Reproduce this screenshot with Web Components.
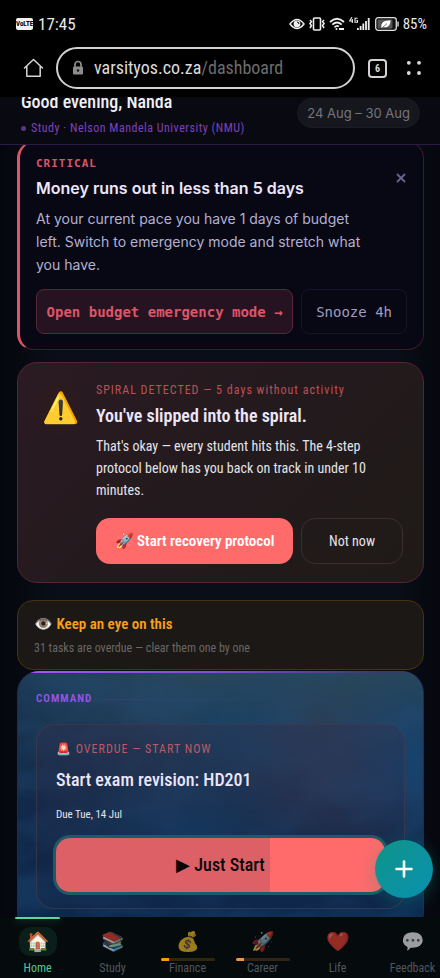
<!DOCTYPE html>
<html lang="en">
<head>
<meta charset="utf-8">
<meta name="viewport" content="width=device-width, initial-scale=1">
<title>VarsityOS</title>
<style>
  html, body {
    height: 100%;
  }

  body {
    --narrow: "Roboto Condensed", Roboto, "Liberation Sans", sans-serif;
    --round: Inter, Roboto, sans-serif;
    --mono: "DejaVu Sans Mono", "Liberation Mono", monospace;
    --coral: #ff6b6b;
    --red: #dd5566;
    --light: #ece6fa;
    margin: 0;
    display: flex;
    flex-direction: column;
    overflow: hidden;
    background: #080a13;
    color: #e4e4ea;
    font-family: var(--narrow);
    font-size: 14px;
    line-height: 22px;
  }

  main {
    flex: 1;
    min-height: 0;
    overflow: hidden auto;
    scrollbar-width: none;
    padding: 0 16px 0 17px;
    background: linear-gradient(90deg, #05060d, #0a0e18 12%, #0a0e18 90%, #06070f);
  }
</style>
</head>
<body>
  <phone-status time="17:45" battery="85%"></phone-status>
  <browser-bar host="varsityos.co.za" path="/dashboard" tabs="6"></browser-bar>
  <page-header>
    <span slot="greeting">Good evening, Nanda</span>
    <span slot="context">Study · Nelson Mandela University (NMU)</span>
    <span slot="week">24 Aug – 30 Aug</span>
  </page-header>

  <main>
    <critical-card>
      <span slot="level">CRITICAL</span>
      <span slot="title">Money runs out in less than 5 days</span>
      At your current pace you have 1 days of budget left. Switch to emergency mode and stretch what you have.
      <span slot="action">Open budget emergency mode →</span>
      <span slot="snooze">Snooze 4h</span>
    </critical-card>

    <spiral-card>
      <span slot="label">SPIRAL DETECTED — 5 days without activity</span>
      <span slot="title">You've slipped into the spiral.</span>
      That's okay — every student hits this. The 4-step protocol below has you back on track in under 10 minutes.
      <span slot="action">🚀 Start recovery protocol</span>
      <span slot="dismiss">Not now</span>
    </spiral-card>

    <notice-card>
      <span slot="title">👁️ Keep an eye on this</span>
      31 tasks are overdue — clear them one by one
    </notice-card>

    <command-card heading="COMMAND">
      <task-card>
        <span slot="label">🚨 OVERDUE — START NOW</span>
        <span slot="title">Start exam revision: HD201</span>
        <span slot="due">Due Tue, 14 Jul</span>
        <span slot="action">▶ Just Start</span>
      </task-card>
    </command-card>
  </main>

  <bottom-nav>
    <nav-item icon="🏠" href="#home" active>Home</nav-item>
    <nav-item icon="📚" href="#study">Study</nav-item>
    <nav-item icon="💰" href="#finance" bar="#f59e0b">Finance</nav-item>
    <nav-item icon="🚀" href="#career" bar="#fb923c">Career</nav-item>
    <nav-item icon="❤️" href="#life">Life</nav-item>
    <nav-item icon="💬" href="#feedback">Feedback</nav-item>
  </bottom-nav>
  <add-button></add-button>

<script>
const base = /*html*/ `
<style>
  * { box-sizing: border-box; }
  :host { display: block; }
  h1, h2, p { margin: 0; font-weight: inherit; }
  button {
    margin: 0;
    padding: 0;
    border: 0;
    background: none;
    color: inherit;
    font: inherit;
    cursor: pointer;
  }
  a { color: inherit; text-decoration: none; }
  svg { display: block; }
</style>
`;

// registers an element whose shadow root is cloned from the markup
function define(name, markup, setup) {
  const template = document.createElement("template");
  template.innerHTML = base + markup;

  class Element extends HTMLElement {
    constructor() {
      super();
      this.attachShadow({ mode: "open" });
      this.shadowRoot.appendChild(template.content.cloneNode(true));
    }

    connectedCallback() {
      if (setup) setup(this, (selector) => this.shadowRoot.querySelector(selector));
    }
  }

  window.customElements.define(name, Element);
}

define("phone-status", /*html*/ `
<style>
  :host {
    display: flex;
    align-items: center;
    height: 47px;
    flex: none;
    padding: 0 13px 0 16px;
    background: #000;
    color: #e8e8e8;
    font-size: 17px;
  }
  .volte {
    width: 17px;
    height: 12px;
    border-radius: 2px;
    background: #f2f2f2;
    color: #000;
    font-size: 7px;
    font-weight: 700;
    line-height: 12px;
    text-align: center;
  }
  #time { margin-left: 5px; }
  .icons {
    display: flex;
    align-items: center;
    gap: 4px;
    margin-left: auto;
  }
  #battery { font-size: 15px; }
</style>
<span class="volte">VoLTE</span>
<span id="time"></span>
<div class="icons">
  <svg width="16" height="12" viewBox="0 0 16 12"><path d="M1 6Q8-3 15 6Q8 15 1 6Z" fill="none" stroke="#eee" stroke-width="1.5"/><circle cx="8" cy="6" r="3.4" fill="#eee"/><path d="M8 4a2 2 0 0 1 2 2" fill="none" stroke="#000"/></svg>
  <svg width="16" height="14" viewBox="0 0 16 14" fill="none" stroke="#eee" stroke-width="1.6"><rect x="4.5" y="1" width="7" height="12" rx="1"/><path d="M1 3l1.4 1.5L1 6.5l1.4 2L1 11M15 3l-1.4 1.5L15 6.5l-1.4 2L15 11"/></svg>
  <svg width="16" height="14" viewBox="0 0 16 14" fill="none" stroke="#eee" stroke-width="1.8"><path d="M1 5Q8-1.5 15 5M3.3 7.6Q8 3.3 12.7 7.6M5.5 10.2Q8 8 9.8 9.6"/><circle cx="7.5" cy="12" r="1" fill="#eee" stroke="none"/><path d="M10 12h5" stroke-width="2"/></svg>
  <svg width="22" height="14" viewBox="0 0 22 14"><path d="M3 0L.7 4H4M3.3 2v4M8.5 1.3H6v4h2.5V3.5H7.4" fill="none" stroke="#eee" stroke-width="1.1"/><path d="M8 11h1.800v2H8zM10.700 9h1.800v4h-1.800zM13.400 6.500h1.800V13h-1.800zM16.100 4h1.800v9h-1.800zM18.800 1h1.800v12h-1.800z" fill="#eee"/></svg>
  <svg width="24" height="14" viewBox="0 0 24 14"><rect x=".7" y=".7" width="20.6" height="12.6" rx="2.5" fill="#111" stroke="#ddd" stroke-width="1.3"/><rect x="2.5" y="2.5" width="15" height="9" rx="1" fill="#555"/><path d="M6.5 11C5.5 5.5 9 3.5 15.5 3.3 15.5 8.5 13 11 8.5 10.2z" fill="#fff"/><path d="M7 11l5-4.500" stroke="#555" stroke-width=".8"/><path d="M23 4.500v5" stroke="#ddd" stroke-width="1.4"/></svg>
  <span id="battery"></span>
</div>
`, (host, $) => {
  $("#time").textContent = host.getAttribute("time");
  $("#battery").textContent = host.getAttribute("battery");
});

define("browser-bar", /*html*/ `
<style>
  :host {
    display: flex;
    align-items: center;
    flex: none;
    padding: 0 18px 8px 22px;
    background: #000;
    color: #dcdcdc;
  }
  .address {
    display: flex;
    align-items: center;
    gap: 10px;
    flex: 1;
    min-width: 0;
    height: 42px;
    margin: 0 13px 0 11px;
    padding: 0 14px;
    border: 2px solid #d2d2d2;
    border-radius: 21px;
    font-size: 18px;
    white-space: nowrap;
  }
  #path { color: #6c6c6c; }
  #tabs {
    width: 19px;
    height: 19px;
    border: 2px solid #d2d2d2;
    border-radius: 4px;
    font-size: 10px;
    font-weight: 700;
    line-height: 15px;
  }
  .menu { margin-left: 19px; }
</style>
<button aria-label="Home page">
  <svg width="23" height="22" viewBox="0 0 23 22" fill="none" stroke="#d6d6d6" stroke-width="1.5" stroke-linejoin="round" stroke-linecap="round"><path d="M2.5 11L11.5 2.5 20.5 11M4.8 9.5V19.3H18.2V9.5"/></svg>
</button>
<button class="address">
  <svg width="12" height="16" viewBox="0 0 12 16"><path d="M3 7V4.500a3 3 0 0 1 6 0V7" fill="none" stroke="#8c8c8c" stroke-width="1.7"/><rect x="1" y="6.5" width="10" height="8" rx="1.2" fill="#8c8c8c"/><circle cx="6" cy="10.5" r="1.2" fill="#111"/></svg>
  <span><span id="host"></span><span id="path"></span></span>
</button>
<button id="tabs"></button>
<button class="menu" aria-label="Menu">
  <svg width="16" height="16" viewBox="0 0 16 16" fill="#dcdcdc"><circle cx="2.8" cy="2.8" r="1.9"/><circle cx="13" cy="2.8" r="1.9"/><circle cx="2.8" cy="13" r="1.9"/><circle cx="13" cy="13" r="1.9"/></svg>
</button>
`, (host, $) => {
  $("#host").textContent = host.getAttribute("host");
  $("#path").textContent = host.getAttribute("path");
  $("#tabs").textContent = host.getAttribute("tabs");
});

define("page-header", /*html*/ `
<style>
  /* scrolled a little way under the browser bar, so the top is cut */
  :host {
    display: flex;
    align-items: flex-end;
    flex: none;
    height: 47px;
    overflow: hidden;
    border-bottom: 1px solid #2b1b45;
    background: #090a11;
  }
  .row {
    display: flex;
    align-items: center;
    justify-content: space-between;
    flex: 1;
    padding: 0 20px 8px 21px;
  }
  h1 {
    color: #f0f0f4;
    font-size: 18px;
    font-weight: 500;
    line-height: 24px;
  }
  p {
    display: flex;
    align-items: center;
    gap: 5px;
    margin-top: 6px;
    color: #7e40bd;
    font-size: 12px;
    line-height: 16px;
    letter-spacing: 0.5px;
  }
  p::before {
    content: "";
    width: 5px;
    height: 5px;
    border-radius: 50%;
    background: #5b3585;
  }
  .week {
    padding: 0 9px;
    border: 1px solid #1a1b22;
    border-radius: 15px;
    background: #16171d;
    color: #74757d;
    font: 13px/28px var(--round);
    white-space: nowrap;
  }
</style>
<div class="row">
  <div>
    <h1><slot name="greeting"></slot></h1>
    <p><slot name="context"></slot></p>
  </div>
  <div class="week"><slot name="week"></slot></div>
</div>
`);

define("critical-card", /*html*/ `
<style>
  :host {
    margin-top: -3px;
    padding: 13px 16px 15px;
    border: 1px solid #3c1a2a;
    border-left: 3px solid var(--red);
    border-radius: 16px;
    background: #080814;
  }
  .head { display: flex; }
  .text {
    flex: 1;
    padding-right: 8px;
  }
  .level {
    color: var(--red);
    font: 700 11px/16px var(--mono);
    letter-spacing: 1px;
  }
  h2 {
    margin-top: 4px;
    color: var(--light);
    font: 600 16px/24px var(--round);
  }
  .body {
    margin-top: 7px;
    color: #b4b0d2;
    font: 14px/23px var(--round);
  }
  .close {
    width: 44px;
    height: 44px;
    flex: none;
    margin-right: -16px;
    color: #67648f;
  }
  .close svg { margin: auto; }
  .actions {
    display: flex;
    gap: 8px;
    margin-top: 13px;
  }
  .actions button {
    height: 45px;
    border: 1px solid #15152a;
    border-radius: 8px;
    color: #a09cc0;
    font: 14px var(--mono);
    white-space: nowrap;
  }
  .actions .open {
    flex: 1;
    border-color: #59263a;
    background: #261321;
    color: var(--red);
    font-weight: 700;
  }
  .actions .snooze { padding: 0 14px; }
</style>
<div class="head">
  <div class="text">
    <p class="level"><slot name="level"></slot></p>
    <h2><slot name="title"></slot></h2>
    <p class="body"><slot></slot></p>
  </div>
  <button class="close" aria-label="Close">
    <svg width="10" height="10" viewBox="0 0 10 10" stroke="currentColor" stroke-width="1.8"><path d="M1 1l8 8M9 1l-8 8"/></svg>
  </button>
</div>
<div class="actions">
  <button class="open"><slot name="action"></slot></button>
  <button class="snooze"><slot name="snooze"></slot></button>
</div>
`);

define("spiral-card", /*html*/ `
<style>
  :host {
    display: flex;
    gap: 14px;
    margin-top: 12px;
    padding: 19px 20px 18px;
    border: 1px solid #54262e;
    border-radius: 20px;
    background: linear-gradient(135deg, #2b1a23, #231a1d 50%, #1f1a17);
  }
  .icon {
    display: flex;
    align-items: center;
    justify-content: center;
    width: 44px;
    height: 52px;
    flex: none;
    border-radius: 50%;
    background: radial-gradient(#2b1a1e 60%, #2d1c22);
    font-size: 30px;
  }
  .label {
    color: #bb5158;
    font-size: 12px;
    line-height: 16px;
    letter-spacing: 1px;
  }
  h2 {
    margin-top: 6px;
    color: var(--light);
    font-size: 18px;
    font-weight: 600;
    line-height: 24px;
  }
  .body { margin-top: 7px; }
  .actions {
    display: flex;
    gap: 8px;
    margin-top: 17px;
  }
  button {
    height: 46px;
    border-radius: 14px;
  }
  .start {
    flex: 1;
    background: var(--coral);
    color: #fff;
    font-size: 15px;
    font-weight: 600;
  }
  .later {
    padding: 0 27px;
    border: 1px solid #37302f;
  }
</style>
<div class="icon">⚠️</div>
<div>
  <p class="label"><slot name="label"></slot></p>
  <h2><slot name="title"></slot></h2>
  <p class="body"><slot></slot></p>
  <div class="actions">
    <button class="start"><slot name="action"></slot></button>
    <button class="later"><slot name="dismiss"></slot></button>
  </div>
</div>
`);

define("notice-card", /*html*/ `
<style>
  :host {
    margin-top: 17px;
    padding: 13px 16px;
    border: 1px solid #48320f;
    border-radius: 16px;
    background: #1b1816;
  }
  h2 {
    color: #f5a11a;
    font-size: 15px;
    font-weight: 600;
    line-height: 20px;
  }
  p {
    margin-top: 6px;
    color: #6a6765;
    font-size: 12px;
    line-height: 16px;
  }
</style>
<h2><slot name="title"></slot></h2>
<p><slot></slot></p>
`);

define("command-card", /*html*/ `
<style>
  :host {
    position: relative;
    overflow: hidden;
    margin-top: 1px;
    padding: 20px 18px 24px;
    border: 1px solid #26275a;
    border-top: 0;
    border-radius: 22px;
    background:
      radial-gradient(90px 70px at 54% 27%, #13467299, transparent),
      radial-gradient(90px 90px at 96% 35%, #0d4a8099, transparent),
      radial-gradient(120px 90px at 78% 38%, #42405888, transparent),
      radial-gradient(130px 70px at 42% 62%, #0c4d7a99, transparent),
      linear-gradient(90deg, #0a234466, transparent 40%),
      linear-gradient(#28475c, #213c55 25%, #172e4d 50%, #0b2a50);
  }
  /* cloudy backdrop */
  .clouds {
    position: absolute;
    inset: 0;
    width: 100%;
    height: 100%;
    opacity: 0.35;
  }
  .edge {
    position: absolute;
    inset: 0 0 auto;
    height: 2px;
    background: linear-gradient(90deg, #a855f7, #7c4fd0 50%, #3d356f 90%, transparent);
  }
  .heading {
    position: relative;
    display: flex;
    align-items: center;
    gap: 10px;
    color: #9b54ea;
    font-size: 11px;
    font-weight: 600;
    line-height: 16px;
    letter-spacing: 1px;
  }
  .heading::after {
    content: "";
    flex: 1;
    height: 1px;
    background: linear-gradient(90deg, #35406f, transparent);
  }
  .content {
    position: relative;
    margin-top: 17px;
  }
</style>
<svg class="clouds" aria-hidden="true">
  <filter id="noise" x="0" y="0" width="100%" height="100%">
    <feTurbulence type="fractalNoise" baseFrequency="0.012 0.02" numOctaves="4" seed="8"/>
    <feColorMatrix values="0 0 0 0 0.02  0 0 0 0 0.08  0 0 0 0 0.2  3 0 0 0 -1.2"/>
  </filter>
  <rect width="100%" height="100%" filter="url(#noise)"/>
</svg>
<div class="edge"></div>
<h2 class="heading"><span id="heading"></span></h2>
<div class="content"><slot></slot></div>
`, (host, $) => {
  $("#heading").textContent = host.getAttribute("heading");
});

define("task-card", /*html*/ `
<style>
  :host {
    padding: 16px 19px;
    border: 1px solid #4a3c5199;
    border-radius: 18px;
    background: linear-gradient(#30304c66, #101c3c44);
  }
  .label {
    color: #bd5a66;
    font-size: 12px;
    line-height: 16px;
    letter-spacing: 1px;
  }
  h2 {
    margin-top: 11px;
    color: var(--light);
    font-size: 18px;
    font-weight: 500;
    line-height: 24px;
  }
  .due {
    margin-top: 15px;
    font-size: 11px;
    line-height: 16px;
  }
  button {
    display: block;
    width: 100%;
    height: 54px;
    margin-top: 15px;
    border-radius: 14px;
    background: linear-gradient(90deg, #dc6066 65%, var(--coral) 65%);
    box-shadow: 0 0 0 3px #1c5c66;
    color: #0a0507;
    font-size: 18px;
    font-weight: 500;
  }
</style>
<p class="label"><slot name="label"></slot></p>
<h2><slot name="title"></slot></h2>
<p class="due"><slot name="due"></slot></p>
<button><slot name="action"></slot></button>
`);

define("bottom-nav", /*html*/ `
<style>
  :host {
    flex: none;
    overflow: hidden;
    background: #050b0d;
  }
  nav { display: flex; }
</style>
<nav><slot></slot></nav>
`);

define("nav-item", /*html*/ `
<style>
  :host { flex: 0 0 75px; }
  a {
    display: flex;
    flex-direction: column;
    align-items: center;
    padding-bottom: 3px;
    color: #50565a;
    font-size: 12px;
    line-height: 14px;
  }
  .mark {
    width: 45px;
    height: 2px;
    margin-bottom: 8px;
    border-radius: 1px;
  }
  .icon {
    width: 38px;
    height: 29px;
    border-radius: 12px;
    font-size: 19px;
    line-height: 29px;
    text-align: center;
  }
  .icon span { opacity: 0.6; }
  .bar {
    width: 54px;
    height: 3px;
    margin-top: 2px;
    border-radius: 2px;
  }
  :host([bar]) .bar {
    background:
      linear-gradient(var(--bar), var(--bar)) 0 0 / 8px 3px no-repeat,
      color-mix(in srgb, var(--bar) 18%, transparent);
  }
  :host([active]) a { color: #56c596; }
  :host([active]) .mark {
    background: #5fd3a0;
    box-shadow: 0 1px 8px #5fd3a066;
  }
  :host([active]) .icon { background: #0b1f1a; }
  :host([active]) .icon span { opacity: 1; }
</style>
<a>
  <div class="mark"></div>
  <div class="icon"><span id="icon"></span></div>
  <div class="bar"></div>
  <slot></slot>
</a>
`, (host, $) => {
  $("a").href = host.getAttribute("href");
  $("#icon").textContent = host.getAttribute("icon");
  host.style.setProperty("--bar", host.getAttribute("bar") || "transparent");
});

define("add-button", /*html*/ `
<style>
  :host {
    position: fixed;
    right: 7px;
    bottom: 74px;
  }
  button {
    width: 58px;
    height: 58px;
    border-radius: 50%;
    background: linear-gradient(135deg, #0f9488, #0a91b0);
    box-shadow: 0 4px 18px #0d948855;
  }
  svg { margin: auto; }
</style>
<button aria-label="Add">
  <svg width="18" height="18" viewBox="0 0 18 18" stroke="#fff" stroke-width="2.6" stroke-linecap="round"><path d="M9 1.500v15M1.500 9h15"/></svg>
</button>
`);
</script>
</body>
</html>
